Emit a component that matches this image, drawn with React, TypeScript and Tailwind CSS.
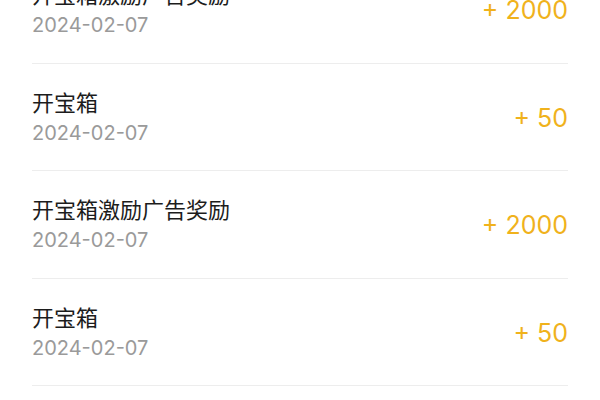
const records = [
  { title: "开宝箱激励广告奖励", date: "2024-02-07", amount: 2000 },
  { title: "开宝箱", date: "2024-02-07", amount: 50 },
  { title: "开宝箱激励广告奖励", date: "2024-02-07", amount: 2000 },
  { title: "开宝箱", date: "2024-02-07", amount: 50 },
  { title: "开宝箱激励广告奖励", date: "2024-02-07", amount: 2000 },
];

export default function App() {
  return (
    <div className="h-[400px] w-[600px] overflow-hidden bg-white font-['Inter','Noto_Sans_CJK_SC',sans-serif]">
      <div className="-mt-[44px] px-8">
        {records.map((r, i) => (
          <div
            key={i}
            className="flex h-[107.5px] items-center justify-between border-b border-[#ededed]"
          >
            <div className="flex flex-col pt-[2px]">
              <span className="text-[22px] leading-[30px] text-[#1c1c1c]">{r.title}</span>
              <span className="text-[20px] leading-[30px] text-[#9a9a9a]">{r.date}</span>
            </div>
            <span className="pt-[2px] text-[25px] leading-[30px] text-[#f0b21c]">+ {r.amount}</span>
          </div>
        ))}
      </div>
    </div>
  );
}
